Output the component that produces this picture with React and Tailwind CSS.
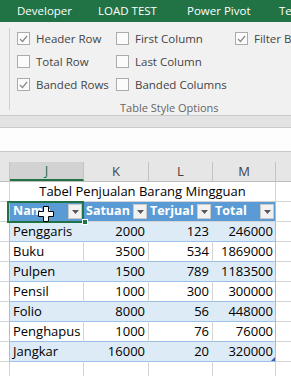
import React from 'react';

const grid = 'border-[#d4d4d4]';
const band = 'bg-[#ddebf7]';

const rows = [
  ['Penggaris', '2000', '123', '246000'],
  ['Buku', '3500', '534', '1869000'],
  ['Pulpen', '1500', '789', '1183500'],
  ['Pensil', '1000', '300', '300000'],
  ['Folio', '8000', '56', '448000'],
  ['Penghapus', '1000', '76', '76000'],
  ['Jangkar', '16000', '20', '320000'],
];

const Check = ({ checked, label }) => (
  <div className="flex items-center gap-[6px] h-[13px]">
    <div className="w-[13px] h-[13px] shrink-0 border border-[#ababab] bg-[#fbfbfb] flex items-center justify-center">
      {checked && (
        <svg width="9" height="8" viewBox="0 0 9 8">
          <path d="M1 4 L3.5 6.5 L8 1" fill="none" stroke="#8a8a8a" strokeWidth="1.2" />
        </svg>
      )}
    </div>
    <span className="text-[11.5px] text-[#444] whitespace-nowrap leading-[14px]">{label}</span>
  </div>
);

const FilterBtn = () => (
  <div className="w-[14px] h-[15px] shrink-0 bg-[#f2f2f2] border border-[#c9c9c9] flex items-center justify-center">
    <svg width="7" height="4" viewBox="0 0 7 4">
      <path d="M0 0 L7 0 L3.5 4 Z" fill="#595959" />
    </svg>
  </div>
);

const App = () => {
  return (
    <div className="w-[291px] h-[376px] overflow-hidden bg-white" style={{ fontFamily: '"Open Sans", sans-serif' }}>
      {/* tab bar */}
      <div className="h-[22px] bg-[#217346] flex items-center text-white text-[11.5px] whitespace-nowrap pl-[17px]">
        <span className="w-[81px] shrink-0">Developer</span>
        <span className="w-[89px] shrink-0">LOAD TEST</span>
        <span className="w-[92px] shrink-0">Power Pivot</span>
        <span>Te</span>
      </div>

      {/* ribbon */}
      <div className="h-[93px] bg-[#f1f1f1] flex pt-[6px] overflow-hidden">
        <div className="w-[10px] shrink-0 h-[82px] border-r border-[#d0d0d0]" />
        <div className="flex flex-col shrink-0">
          <div className="flex pt-[4px] pl-[7px]">
            <div className="w-[99px] shrink-0 flex flex-col gap-[10px]">
              <Check checked label="Header Row" />
              <Check label="Total Row" />
              <Check checked label="Banded Rows" />
            </div>
            <div className="w-[119px] shrink-0 flex flex-col gap-[10px]">
              <Check label="First Column" />
              <Check label="Last Column" />
              <Check label="Banded Columns" />
            </div>
            <div className="flex flex-col shrink-0">
              <Check checked label="Filter Button" />
            </div>
          </div>
          <div className="pl-[110px] pt-[10px] text-[11px] text-[#666] whitespace-nowrap leading-[14px]">Table Style Options</div>
        </div>
      </div>

      {/* bands under ribbon */}
      <div className="h-[11px] bg-[#e3e3e3] border-t border-b border-[#cbcbcb] box-content" />
      <div className="h-[24px] bg-[#fdfdfd] border-b border-[#c8c8c8]" />
      <div className="h-[10px] bg-[#e6e6e6]" />

      {/* column headers */}
      <div className="flex h-[20px] bg-[#e6e6e6] text-[13px] text-[#444] border-b border-[#bdbdbd]">
        <div className="w-[10px] shrink-0 border-r border-[#c4c4c4]" />
        <div className="w-[74px] shrink-0 bg-[#d2d2d2] border-r border-[#c4c4c4] border-b-2 border-b-[#217346] flex items-center justify-center text-[#217346]">J</div>
        <div className="w-[65px] shrink-0 border-r border-[#c4c4c4] flex items-center justify-center">K</div>
        <div className="w-[64px] shrink-0 border-r border-[#c4c4c4] flex items-center justify-center">L</div>
        <div className="w-[63px] shrink-0 border-r border-[#c4c4c4] flex items-center justify-center">M</div>
        <div className="flex-1" />
      </div>

      {/* sheet */}
      <div className="text-[13px] text-black">
        {/* title row */}
        <div className={`flex h-[20px] border-b ${grid}`}>
          <div className={`w-[10px] shrink-0 border-r ${grid}`} />
          <div className={`w-[266px] shrink-0 border-r ${grid} flex items-center justify-center whitespace-nowrap pt-[1px]`}>
            Tabel Penjualan Barang Mingguan
          </div>
          <div className="flex-1" />
        </div>

        {/* header row */}
        <div className={`flex h-[20px] border-b ${grid}`}>
          <div className="w-[10px] shrink-0 border-r border-[#9bc2e6]" />
          <div className="w-[266px] shrink-0 flex bg-[#5b9bd5] text-white text-[12.5px] font-bold border-r border-[#9bc2e6]">
            <div className="relative w-[74px] shrink-0 flex items-center justify-between pl-[3px] pr-[2px]">
              <span>Name</span>
              <FilterBtn />
              <div className="absolute left-[-3px] top-[-1px] w-[77px] h-[22px] border-2 border-[#217346]" />
              <div className="absolute right-[-4px] bottom-[-4px] w-[6px] h-[6px] bg-[#217346] border border-white" />
              <svg className="absolute left-[28px] top-[4px]" width="16" height="16" viewBox="0 0 16 16">
                <path d="M5.5 0.5 H10.5 V5.5 H15.5 V10.5 H10.5 V15.5 H5.5 V10.5 H0.5 V5.5 H5.5 Z" fill="white" stroke="black" strokeWidth="1" />
              </svg>
            </div>
            <div className="w-[65px] shrink-0 flex items-center justify-between pl-[2px] pr-[2px]">
              <span>Satuan</span>
              <FilterBtn />
            </div>
            <div className="w-[64px] shrink-0 flex items-center justify-between pl-[1px] pr-[2px]">
              <span>Terjual</span>
              <FilterBtn />
            </div>
            <div className="w-[62px] shrink-0 flex items-center justify-between pl-[2px] pr-[1px]">
              <span>Total</span>
              <FilterBtn />
            </div>
          </div>
          <div className="flex-1" />
        </div>

        {/* data rows */}
        {rows.map((r, i) => {
          const banded = i % 2 === 0;
          const inner = banded ? 'border-[#ddebf7]' : grid;
          return (
            <div key={r[0]} className="flex h-[20px]">
              <div className={`w-[10px] shrink-0 border-r border-b border-r-[#9bc2e6] ${grid}`} />
              <div className={`w-[74px] shrink-0 border-r border-b ${inner} border-b-[#9bc2e6] ${banded ? band : ''} flex items-center pl-[3px] pt-[1px]`}>{r[0]}</div>
              <div className={`w-[65px] shrink-0 border-r border-b ${inner} border-b-[#9bc2e6] ${banded ? band : ''} flex items-center justify-end pr-[3px] pt-[1px]`}>{r[1]}</div>
              <div className={`w-[64px] shrink-0 border-r border-b ${inner} border-b-[#9bc2e6] ${banded ? band : ''} flex items-center justify-end pr-[3px] pt-[1px]`}>{r[2]}</div>
              <div className={`relative w-[63px] shrink-0 border-r border-b border-[#9bc2e6] ${banded ? band : ''} flex items-center justify-end pr-[2px] pt-[1px]`}>
                {r[3]}
                {i === rows.length - 1 && (
                  <svg className="absolute right-0 bottom-0" width="4" height="4" viewBox="0 0 4 4">
                    <path d="M4 0 L4 4 L0 4 Z" fill="#3c5aa8" />
                  </svg>
                )}
              </div>
              <div className={`flex-1 border-b ${grid}`} />
            </div>
          );
        })}

        {/* empty row */}
        <div className={`flex h-[20px] border-b ${grid}`}>
          <div className={`w-[10px] shrink-0 border-r ${grid}`} />
          <div className={`w-[74px] shrink-0 border-r ${grid}`} />
          <div className={`w-[65px] shrink-0 border-r ${grid}`} />
          <div className={`w-[64px] shrink-0 border-r ${grid}`} />
          <div className={`w-[63px] shrink-0 border-r ${grid}`} />
        </div>
      </div>
    </div>
  );
};

export default App;
